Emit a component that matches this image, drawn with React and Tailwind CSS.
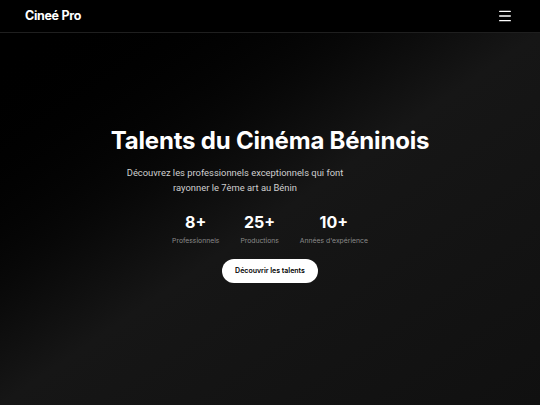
import React from 'react';
import { Menu } from 'lucide-react';

const stats = [
    { value: '8+', label: 'Professionnels' },
    { value: '25+', label: 'Productions' },
    { value: '10+', label: "Années d'expérience" },
];

const App = () => {
    return (
        <div className="min-h-[405px] flex flex-col bg-black text-white" style={{ fontFamily: 'Inter, "Liberation Sans", sans-serif' }}>
            {/* Header */}
            <header className="h-[33px] flex items-center justify-between pl-[25px] pr-[27px] border-b border-[#1f1f1f] bg-black">
                <span className="text-[12.5px] font-bold tracking-tight">Cineé Pro</span>
                <Menu size={16} strokeWidth={2} className="text-white" />
            </header>

            {/* Hero */}
            <main className="flex-1 flex flex-col items-center bg-gradient-to-br from-black via-[#161616] to-[#101010] pt-[93px]">
                <h1 className="text-[24px] leading-[30px] font-bold tracking-[-0.2px]">Talents du Cinéma Béninois</h1>
                <p className="mt-[9px] mr-[70px] max-w-[222px] text-center text-[9.4px] leading-[15px] text-[#cfcfcf] font-['Roboto',sans-serif]">
                    Découvrez les professionnels exceptionnels qui font rayonner le 7ème art au Bénin
                </p>

                <div className="mt-[17px] flex gap-[21px]">
                    {stats.map(s => (
                        <div key={s.label} className="flex flex-col items-center">
                            <span className="text-[16px] leading-[20px] font-bold">{s.value}</span>
                            <span className="mt-[4px] text-[6.8px] text-[#8a8a8a]">{s.label}</span>
                        </div>
                    ))}
                </div>

                <button className="mt-[13px] h-[24px] px-[13px] rounded-full bg-white text-black text-[7px] font-semibold">
                    Découvrir les talents
                </button>
            </main>
        </div>
    );
};

export default App;
